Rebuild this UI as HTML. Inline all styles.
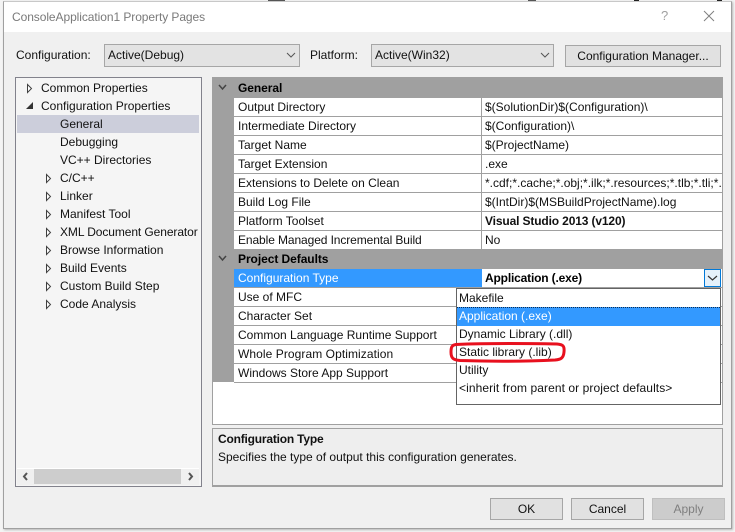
<!DOCTYPE html>
<html><head><meta charset="utf-8">
<style>
html,body{margin:0;padding:0}
body{width:735px;height:532px;position:relative;overflow:hidden;background:#f4f4f4;font-family:"Liberation Sans",sans-serif;font-size:12px;color:#111}
div,span{position:absolute;box-sizing:border-box;white-space:nowrap}
.t{height:18px;line-height:18px}
svg{position:absolute;left:0;top:0}
.b{background:#e1e1e1;border:1px solid #a6a6a6;text-align:center}
.r{left:234px;width:488px;height:19px;border-bottom:1px solid #a0a0a0;background:#fff}
.r span{line-height:18px;top:0}
.r .k{left:4px}
.r .v{left:251px;width:236px;overflow:hidden}
.r .s{left:247px;top:0;width:1px;height:18px;background:#a0a0a0}
.h{left:213px;width:509px;background:#a0a0a0;font-weight:bold;padding-left:25px;line-height:21px;color:#000;letter-spacing:-.06px}
</style></head>
<body>
<div style="left:3px;top:1px;width:729px;height:528px;background:#f0f0f0;border:1px solid #a0a0a0;border-top:1px solid #c8c8c8;box-shadow:1px 1px 2px rgba(0,0,0,.25)"></div>
<div style="left:4px;top:2px;width:727px;height:30px;background:#fff"></div>
<div class="t" style="left:12px;top:8px;color:#7a7a7a;letter-spacing:-.07px">ConsoleApplication1 Property Pages</div>
<div class="t" style="left:661px;top:7px;color:#a0a0a0;font-size:13px">?</div>

<div class="t" style="left:16px;top:46px">Configuration:</div>
<div class="b" style="left:104px;top:44px;width:196px;height:23px;background:#e3e3e3"></div>
<div class="t" style="left:108px;top:46px">Active(Debug)</div>
<div class="t" style="left:310px;top:46px">Platform:</div>
<div class="b" style="left:371px;top:44px;width:183px;height:23px;background:#e3e3e3"></div>
<div class="t" style="left:375px;top:46px">Active(Win32)</div>
<div class="b" style="left:565px;top:45px;width:156px;height:22px;line-height:20px">Configuration Manager...</div>

<!-- tree -->
<div style="left:15px;top:77px;width:187px;height:410px;background:#f5f5f5;border:1px solid #82828c"></div>
<div style="left:17px;top:115px;width:182px;height:18px;background:#cccedb"></div>
<div class="t" style="left:41px;top:79px">Common Properties</div>
<div class="t" style="left:41px;top:97px">Configuration Properties</div>
<div class="t" style="left:60px;top:115px">General</div>
<div class="t" style="left:60px;top:133px">Debugging</div>
<div class="t" style="left:60px;top:151px">VC++ Directories</div>
<div class="t" style="left:60px;top:169px">C/C++</div>
<div class="t" style="left:60px;top:187px">Linker</div>
<div class="t" style="left:60px;top:205px">Manifest Tool</div>
<div class="t" style="left:60px;top:223px;letter-spacing:-.09px">XML Document Generator</div>
<div class="t" style="left:60px;top:241px">Browse Information</div>
<div class="t" style="left:60px;top:259px">Build Events</div>
<div class="t" style="left:60px;top:277px">Custom Build Step</div>
<div class="t" style="left:60px;top:295px">Code Analysis</div>
<div style="left:17px;top:468px;width:182px;height:17px;background:#f0f0f0;border-top:1px solid #fff"></div>
<div style="left:34px;top:469px;width:147px;height:15px;background:#cdcdcd"></div>

<!-- grid -->
<div style="left:212px;top:77px;width:511px;height:348px;background:#fff;border:1px solid #a0a0a0"></div>
<div style="left:213px;top:78px;width:21px;height:304px;background:#a0a0a0"></div>
<div class="h" style="top:77px;height:21px;line-height:22px">General</div>
<div class="r" style="top:98px"><span class="k">Output Directory</span><span class="s"></span><span class="v">$(SolutionDir)$(Configuration)\</span></div>
<div class="r" style="top:117px"><span class="k">Intermediate Directory</span><span class="s"></span><span class="v">$(Configuration)\</span></div>
<div class="r" style="top:136px"><span class="k">Target Name</span><span class="s"></span><span class="v">$(ProjectName)</span></div>
<div class="r" style="top:155px"><span class="k">Target Extension</span><span class="s"></span><span class="v">.exe</span></div>
<div class="r" style="top:174px"><span class="k">Extensions to Delete on Clean</span><span class="s"></span><span class="v">*.cdf;*.cache;*.obj;*.ilk;*.resources;*.tlb;*.tli;*.tlh;*.tmp</span></div>
<div class="r" style="top:193px"><span class="k">Build Log File</span><span class="s"></span><span class="v">$(IntDir)$(MSBuildProjectName).log</span></div>
<div class="r" style="top:212px"><span class="k">Platform Toolset</span><span class="s"></span><span class="v" style="font-weight:bold;letter-spacing:-.14px">Visual Studio 2013 (v120)</span></div>
<div class="r" style="top:231px"><span class="k" style="letter-spacing:-.1px">Enable Managed Incremental Build</span><span class="s"></span><span class="v">No</span></div>
<div class="h" style="top:250px;height:19px;line-height:18px">Project Defaults</div>
<div class="r" style="top:269px"><span class="k" style="color:#fff;z-index:2">Configuration Type</span><span style="left:0;top:0;width:248px;height:18px;background:#3399ff"></span><span class="v" style="font-weight:bold;color:#000;letter-spacing:-.17px">Application (.exe)</span></div>
<div class="r" style="top:288px"><span class="k">Use of MFC</span><span class="s"></span></div>
<div class="r" style="top:307px"><span class="k">Character Set</span><span class="s"></span></div>
<div class="r" style="top:326px"><span class="k">Common Language Runtime Support</span><span class="s"></span></div>
<div class="r" style="top:345px"><span class="k" style="letter-spacing:.07px">Whole Program Optimization</span><span class="s"></span></div>
<div class="r" style="top:364px;border-bottom:0"><span class="k">Windows Store App Support</span><span class="s"></span></div>
<div style="left:234px;top:382px;width:488px;height:1px;background:#a0a0a0"></div>

<!-- dropdown arrow button -->
<div style="left:704px;top:269px;width:17px;height:18px;background:#e5f1fb;border:1px solid #0078d7"></div>

<!-- dropdown -->
<div style="left:456px;top:288px;width:265px;height:117px;background:#fff;border:1px solid #646464"></div>
<div style="left:457px;top:307px;width:263px;height:19px;background:#3399ff;border:1px dotted #0b2e55;border-width:1px 0 0 0"></div>
<div class="t" style="left:459px;top:289px">Makefile</div>
<div class="t" style="left:459px;top:307px;color:#fff">Application (.exe)</div>
<div class="t" style="left:459px;top:325px">Dynamic Library (.dll)</div>
<div class="t" style="left:459px;top:343px">Static library (.lib)</div>
<div class="t" style="left:459px;top:361px">Utility</div>
<div class="t" style="left:459px;top:379px;letter-spacing:.08px">&lt;inherit from parent or project defaults&gt;</div>

<!-- description -->
<div style="left:212px;top:428px;width:511px;height:59px;background:#eeeeee;border:1px solid #a0a0a0;border-bottom:2px solid #a0a0a0"></div>
<div class="t" style="left:218px;top:430px;font-weight:bold;letter-spacing:-.2px">Configuration Type</div>
<div class="t" style="left:218px;top:448px">Specifies the type of output this configuration generates.</div>

<!-- buttons -->
<div class="b" style="left:490px;top:498px;width:73px;height:22px;line-height:20px">OK</div>
<div class="b" style="left:571px;top:498px;width:73px;height:22px;line-height:20px">Cancel</div>
<div class="b" style="left:652px;top:498px;width:73px;height:22px;line-height:20px;background:#cccccc;border-color:#bfbfbf;color:#7f7f7f">Apply</div>

<svg width="735" height="532" viewBox="0 0 735 532" fill="none">
  <!-- close -->
  <path d="M704 11L714 21M714 11L704 21" stroke="#808080" stroke-width="1"/>
  <!-- combo chevrons -->
  <path d="M287 53L291 57L295 53" stroke="#555" stroke-width="1"/>
  <path d="M541 53L545 57L549 53" stroke="#555" stroke-width="1"/>
  <!-- section chevrons -->
  <path d="M219 85L222.500 89L226 85" stroke="#444" stroke-width="1.500"/>
  <path d="M219 256L222.500 260L226 256" stroke="#444" stroke-width="1.500"/>
  <!-- dropdown chevron -->
  <path d="M708 276L712.500 280L717 276" stroke="#333" stroke-width="1.200"/>
  <!-- tree arrows -->
  <g stroke="#404040" stroke-width="1" fill="#fff">
    <path d="M27.500 84.500V92.500L31.500 88.500Z"/>
    <path d="M46.500 174.500V182.500L50.500 178.500Z"/>
    <path d="M46.500 192.500V200.500L50.500 196.500Z"/>
    <path d="M46.500 210.500V218.500L50.500 214.500Z"/>
    <path d="M46.500 228.500V236.500L50.500 232.500Z"/>
    <path d="M46.500 246.500V254.500L50.500 250.500Z"/>
    <path d="M46.500 264.500V272.500L50.500 268.500Z"/>
    <path d="M46.500 282.500V290.500L50.500 286.500Z"/>
    <path d="M46.500 300.500V308.500L50.500 304.500Z"/>
  </g>
  <path d="M26 109H33V102Z" fill="#333"/>
  <!-- scrollbar arrows -->
  <path d="M27 473L24 476.500L27 480" stroke="#555" stroke-width="2"/>
  <path d="M189 473L192 476.500L189 480" stroke="#555" stroke-width="2"/>
  <!-- red annotation -->
  <path d="M456 344.500C490 343 530 343.500 557 344C564 344.500 564.500 347 564 352C563.500 358 561 359.500 555 360C525 361.500 490 361.500 460 360.500C453 360 451 358 451 352C451 347 452 345 456 344.500Z" stroke="#e8101e" stroke-width="3"/>
  <!-- backdrop artifacts above the window -->
  <path d="M268 0H285V1H268ZM528 0H536V1H528Z" fill="#555"/>
  <path d="M634 0H639V1H634ZM717 0H722V1H717Z" fill="#222"/>
</svg>
</body></html>
